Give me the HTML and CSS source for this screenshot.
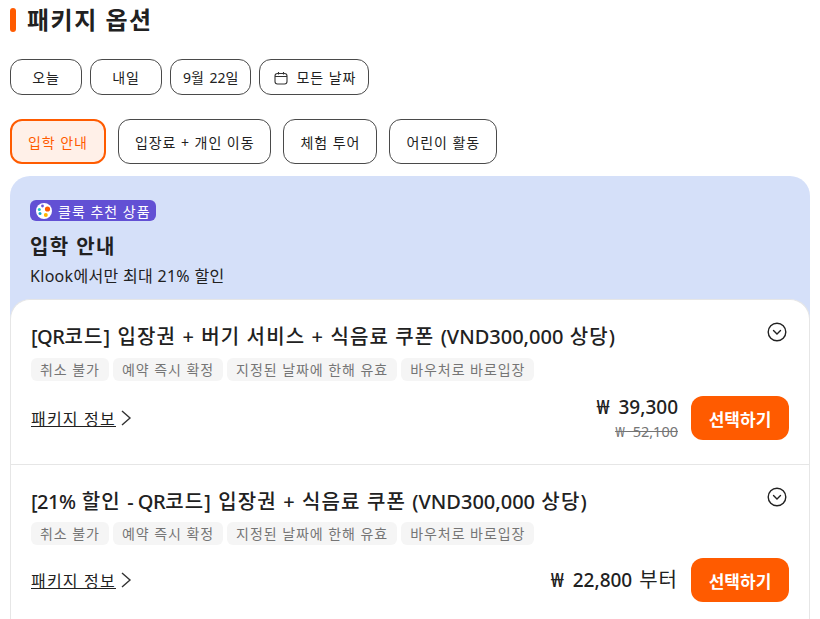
FILE: index.html
```html
<!DOCTYPE html>
<html lang="ko">
<head>
  <meta charset="UTF-8">
  <title>패키지 옵션</title>
  <link rel="stylesheet" href="styles.css">
</head>
<body>

  <h2 class="section-title">패키지 옵션</h2>

  <div class="chips dates">
    <button class="chip date-chip">오늘</button>
    <button class="chip date-chip">내일</button>
    <button class="chip date-chip narrow num">9월 22일</button>
    <button class="chip date-chip narrow all-dates">
      <svg class="cal" width="14" height="14" viewBox="0 0 14 14" fill="none" stroke="#333" stroke-width="1.1">
        <rect x="1" y="2.500" width="12" height="10.500" rx="2.500"/>
        <path d="M1 5.500h12M4.500 1v2.500M9.500 1v2.500"/>
      </svg>모든 날짜
    </button>
  </div>

  <div class="chips tabs">
    <button class="chip tab active">입학 안내</button>
    <button class="chip tab">입장료 + 개인 이동</button>
    <button class="chip tab">체험 투어</button>
    <button class="chip tab">어린이 활동</button>
  </div>

  <section class="panel">
    <div class="panel-head">
      <span class="badge">
        <svg width="16" height="16" viewBox="0 0 16 16">
          <circle cx="8" cy="8" r="8" fill="#fff"/>
          <circle cx="11.500" cy="6" r="2.600" fill="#ff5b00"/>
          <circle cx="3.300" cy="6.500" r="1.500" fill="#1fc4c4"/>
          <circle cx="4" cy="10.500" r="1.500" fill="#12a8c9"/>
          <circle cx="9.800" cy="12" r="2" fill="#ffb800"/>
          <circle cx="6.500" cy="3" r="1.400" fill="#6a55d6"/>
        </svg>
        클룩 추천 상품
      </span>
      <h3>입학 안내</h3>
      <p>Klook에서만 최대 21% 할인</p>
    </div>

    <div class="list">
      <div class="item">
        <div class="item-top">
          <h4><span class="tight">[QR</span>코드] 입장권 + 버기 서비스 + 식음료 쿠폰 <span class="latin">(VND300,000</span> 상당)</h4>
          <svg class="toggle" width="20" height="20" viewBox="0 0 20 20" fill="none" stroke="#212121" stroke-width="1.4">
            <circle cx="10" cy="10" r="8.800"/>
            <path d="M6.500 8.500 10 12l3.500-3.500" stroke-linecap="round"/>
          </svg>
        </div>
        <div class="tags">
          <span>취소 불가</span>
          <span>예약 즉시 확정</span>
          <span>지정된 날짜에 한해 유효</span>
          <span>바우처로 바로입장</span>
        </div>
        <div class="item-bottom">
          <a class="info" href="#">패키지 정보</a>
          <svg class="arrow" width="12" height="16" viewBox="0 0 12 16" fill="none" stroke="#333" stroke-width="1.400"><path d="M2 1l8 7-8 7"/></svg>
          <div class="price">
            <div class="now">₩ 39,300</div>
            <div class="was">₩ 52,100</div>
          </div>
          <button class="select">선택하기</button>
        </div>
      </div>

      <div class="item">
        <div class="item-top">
          <h4><span class="tight">[21%</span> 할인 <span class="tight">- QR</span>코드] 입장권 + 식음료 쿠폰 <span class="latin">(VND300,000</span> 상당)</h4>
          <svg class="toggle" width="20" height="20" viewBox="0 0 20 20" fill="none" stroke="#212121" stroke-width="1.4">
            <circle cx="10" cy="10" r="8.800"/>
            <path d="M6.500 8.500 10 12l3.500-3.500" stroke-linecap="round"/>
          </svg>
        </div>
        <div class="tags">
          <span>취소 불가</span>
          <span>예약 즉시 확정</span>
          <span>지정된 날짜에 한해 유효</span>
          <span>바우처로 바로입장</span>
        </div>
        <div class="item-bottom">
          <a class="info" href="#">패키지 정보</a>
          <svg class="arrow" width="12" height="16" viewBox="0 0 12 16" fill="none" stroke="#333" stroke-width="1.400"><path d="M2 1l8 7-8 7"/></svg>
          <div class="price">
            <div class="now">₩ 22,800 <span class="from">부터</span></div>
          </div>
          <button class="select">선택하기</button>
        </div>
      </div>
    </div>
  </section>

</body>
</html>
```

FILE: styles.css
```css
html, body {
  height: 619px;
  overflow: hidden;
}

body {
  margin: 0;
  padding: 0 10px;
  font-family: "Noto Sans", "Noto Sans CJK KR", sans-serif;
  color: #212121;
  background-color: white;
}

.section-title {
  margin: 0;
  padding: 8px 0 0 17px;
  height: 24px;
  line-height: 24px;
  font-size: 24px;
  font-weight: 700;
  letter-spacing: 1.5px;
  position: relative;
}

.section-title::before {
  content: "";
  position: absolute;
  left: 0;
  top: 8px;
  width: 6px;
  height: 24px;
  border-radius: 3px;
  background-color: #ff5b00;
}

.chips {
  display: flex;
}

.dates {
  margin-top: 27px;
  gap: 8px;
}

.tabs {
  margin-top: 24px;
  gap: 12px;
}

.chip {
  font-family: inherit;
  letter-spacing: 0.95px;
  color: #212121;
  background-color: white;
  border: 1px solid #4a4a4a;
  padding: 0;
  font-size: 14px;
}

.date-chip {
  width: 72px;
  height: 36px;
  border-radius: 12px;
}

.date-chip.narrow {
  width: auto;
  padding: 0 12px;
}

.date-chip.num {
  letter-spacing: 0;
  word-spacing: 2px;
}

.date-chip.all-dates {
  padding: 0 12px 0 14px;
}

.cal {
  vertical-align: -2px;
  margin-right: 8px;
}

.tab {
  height: 45px;
  padding: 0 16px;
  border-radius: 12px;
}

.tab.active {
  border: 2px solid #ff5b00;
  background-color: #fff0e8;
  color: #ff5b00;
}

.panel {
  margin-top: 12px;
  background-color: #d5e0f9;
  border-radius: 20px 20px 0 0;
}

.panel-head {
  padding: 24px 20px 0;
  height: 99px;
}

.badge {
  display: inline-flex;
  align-items: center;
  gap: 6px;
  height: 21px;
  padding: 0 5px 0 6px;
  border-radius: 6px;
  background-color: #6250d4;
  color: white;
  font-size: 14px;
  letter-spacing: 1px;
}

.panel-head h3 {
  margin: 9px 0 0;
  font-size: 20px;
  line-height: 28px;
  font-weight: 700;
  letter-spacing: 1.4px;
}

.panel-head p {
  margin: 3px 0 0;
  font-size: 16px;
  line-height: 24px;
  letter-spacing: 0.3px;
}

.list {
  padding-top: 1px;
  background-color: white;
  border: 1px solid #e6e6e6;
  border-bottom: none;
  border-radius: 20px 20px 0 0;
}

.item {
  padding: 20px 20px 22px;
  border-bottom: 1px solid #e6e6e6;
}

.item + .item .item-top {
  padding-top: 1px;
}

.item + .item .tags {
  margin-top: 4px;
}

.item-top {
  display: flex;
  justify-content: space-between;
  align-items: flex-start;
}

.item-top h4 {
  margin: 0;
  font-size: 20px;
  line-height: 32px;
  font-weight: 500;
  letter-spacing: 1.12px;
}

.item-top .latin {
  letter-spacing: 0;
}

.item-top .tight {
  letter-spacing: -0.5px;
}

.toggle {
  margin: 1px 2px 0 0;
}

.tags {
  display: flex;
  gap: 4px;
  margin-top: 5px;
}

.tags span {
  height: 23px;
  line-height: 23px;
  padding: 0 9px;
  border-radius: 6px;
  background-color: #f5f5f5;
  color: #757575;
  font-size: 14px;
  letter-spacing: 0.95px;
}

.item-bottom {
  display: flex;
  align-items: center;
  margin-top: 13px;
  min-height: 44px;
}

.info {
  color: #212121;
  font-size: 16px;
  letter-spacing: 1.2px;
}

.arrow {
  margin-left: 4px;
}

.price {
  margin-left: auto;
  margin-right: 13px;
  text-align: right;
  word-spacing: 0.25em;
}

.now {
  font-size: 19px;
  line-height: 26px;
  font-weight: 500;
}

.from {
  font-size: 20px;
  font-weight: 400;
  letter-spacing: 1px;
  margin-left: -2px;
}

.was {
  font-size: 14.500px;
  line-height: 22px;
  color: #757575;
  text-decoration: line-through;
}

.select {
  width: 98px;
  height: 44px;
  border: none;
  border-radius: 12px;
  background-color: #ff5b00;
  color: white;
  font-family: inherit;
  font-size: 17px;
  font-weight: 700;
}
```
